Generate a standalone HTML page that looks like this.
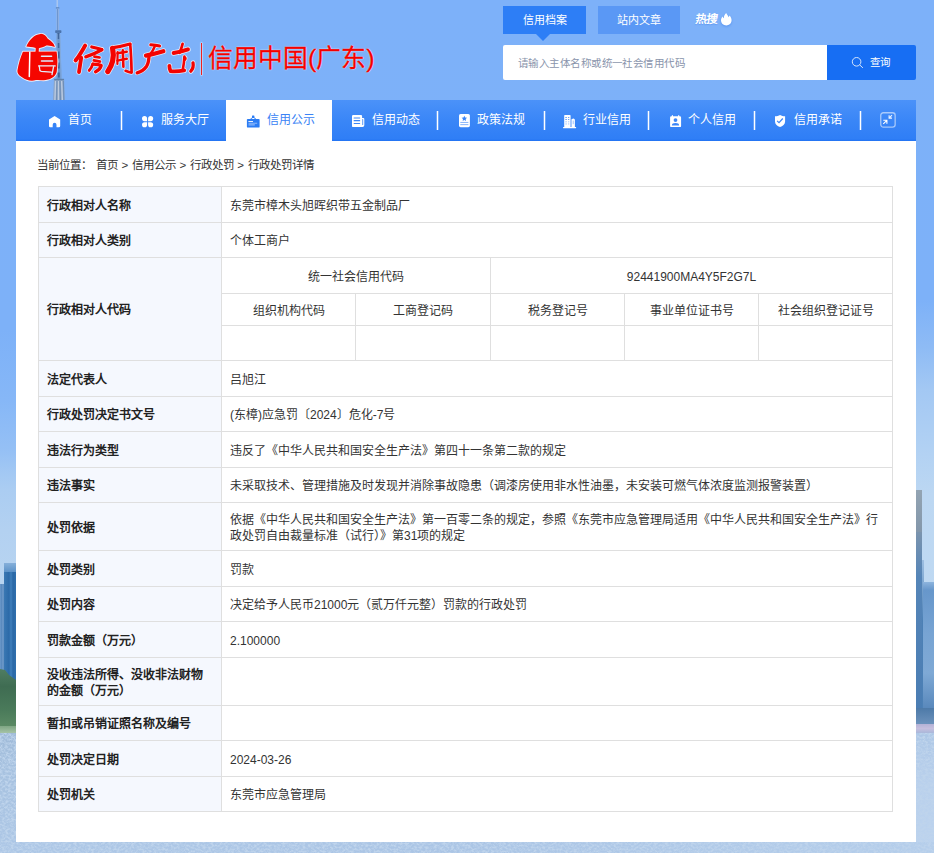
<!DOCTYPE html>
<html lang="zh-CN">
<head>
<meta charset="utf-8">
<title>行政处罚详情 - 信用中国(广东)</title>
<style>
*{box-sizing:border-box;margin:0;padding:0}
html,body{width:934px;height:853px;overflow:hidden}
body{position:relative;font-family:"Liberation Sans", sans-serif;color:#333;background:#7db1f9;font-size:12px}
.abs{position:absolute}
/* ---------- photographic background approximation ---------- */
#sky{position:absolute;left:0;top:0;width:934px;height:853px;
 background:linear-gradient(180deg,#7db1f9 0px,#7db1f8 330px,#86b7f7 400px,#95c0f5 450px,#a4c9f3 475px,#abcdf2 490px,#b3d1f1 530px,#b9d5f0 600px,#aac5e5 853px)}
#skyr{position:absolute;left:916px;top:0;width:18px;height:740px;
 background:linear-gradient(180deg,#7db1f9 0px,#7db1f8 300px,#8ebbf5 347px,#a3c8f3 390px,#b3d2f3 455px,#bcd7f2 495px,#bfd9f2 600px)}
/* ---------- header ---------- */
#logo-sep{position:absolute;left:201px;top:43px;width:1.3px;height:32px;background:#f02020;box-shadow:0 0 1px 0.5px rgba(255,255,255,.75)}
#title{position:absolute;left:208px;top:43px;height:32px;line-height:32px;font-size:24.75px;color:#f40000;white-space:nowrap;-webkit-text-stroke:0.35px #f40000;text-shadow:0 0 1.5px rgba(255,255,255,.9),0 0 1px rgba(255,255,255,.9)}
.tab{position:absolute;top:6px;height:28px;line-height:28px;text-align:center;color:#fff;font-size:11px;white-space:nowrap}
#tab1{left:503px;width:83px;background:#2d7ef6}
#tab1:after{content:"";position:absolute;left:32.5px;top:27.7px;border:7.5px solid transparent;border-top:7.4px solid #2d7ef6;border-bottom:0}
#tab2{left:598px;width:82px;background:#5a98f5}
#hot{position:absolute;left:694px;top:5px;height:28px;line-height:28px;color:#fff;font-size:11.5px;font-weight:bold;white-space:nowrap;text-shadow:0 1px 1px rgba(40,110,230,.35);transform:skewX(-7deg);transform-origin:0 100%}
#search{position:absolute;left:503px;top:45px;width:325px;height:35px;background:#fff;border-radius:2px 0 0 2px;line-height:37px;padding-left:15px;font-size:10.5px;letter-spacing:.45px;color:#8994ab;white-space:nowrap}
#btn{position:absolute;left:827px;top:45px;width:89px;height:35px;background:#176ef3;border-radius:0 2px 2px 0;color:#fff;font-size:10.5px;line-height:35px;white-space:nowrap}
#btn span{position:absolute;left:43px;top:0}
/* ---------- nav ---------- */
#navbg{position:absolute;left:16px;top:100px;width:900px;height:41px;background:linear-gradient(180deg,#4b92f9 0,#3a86f7 50%,#2f7ef6 39px,#2173f3 41px)}
#navon{position:absolute;left:226px;top:100px;width:106px;height:41px;background:#fff}
.nt{position:absolute;top:100px;height:41px;line-height:41px;font-size:12px;color:#fff;white-space:nowrap}
.nt.b{color:#3a83f5}
.ns{position:absolute;top:111px;width:1px;height:19px;background:#fff;box-shadow:1px 0 0 rgba(255,255,255,.25),-1px 0 0 rgba(255,255,255,.25)}
.ic{position:absolute;overflow:visible}
/* ---------- panel ---------- */
#panel{position:absolute;left:16px;top:141px;width:900px;height:701px;background:#fff}
#crumb{position:absolute;left:37px;top:157px;height:17px;line-height:17px;font-size:11.5px;letter-spacing:.12px;color:#333;white-space:nowrap}
.th{position:absolute;left:39px;width:182px;background:#f5f8fe;display:flex;align-items:center;padding-left:8px;padding-top:2px;font-weight:bold;font-size:12px;line-height:16px;color:#222;white-space:nowrap}
.td{position:absolute;left:222px;width:670px;display:flex;align-items:center;padding-left:8px;padding-top:2px;font-size:12px;line-height:16px;color:#333;white-space:nowrap}
.tc{position:absolute;display:flex;align-items:center;justify-content:center;padding-top:2px;font-size:12px;line-height:16px;color:#333;white-space:nowrap}
.hl{position:absolute;height:1px;background:#dfdfdf}
.vl{position:absolute;width:1px;background:#dfdfdf}
</style>
</head>
<body>
<div id="sky"></div><div id="skyr"></div>
<!-- left strip of the skyline photo -->
<div class="abs" style="left:0;top:584px;width:4px;height:92px;background:linear-gradient(90deg,#6c9acb 0,#5585ba 2px,#7aa5d2 3px,#4f80b6 4px)"></div>
<div class="abs" style="left:4px;top:563px;width:12px;height:120px;background:linear-gradient(90deg,#3a78b3 0,#2c6aa8 5px,#3f7fbb 7px,#2a68a6 9px,#2f6fad 12px)"></div>
<div class="abs" style="left:4px;top:563px;width:12px;height:9px;background:linear-gradient(180deg,#86b0da,#5c92c8)"></div>
<div class="abs" style="left:0;top:669px;width:16px;height:58px;background:linear-gradient(180deg,#4f7d62 0,#3f6c52 30%,#4a7a5a 70%,#5b8a64 100%);clip-path:polygon(0 0,5px 1px,9px 6px,16px 11px,16px 100%,0 100%)"></div>
<div class="abs" style="left:0;top:726px;width:16px;height:7px;background:linear-gradient(180deg,#7fa684,#a5c3a6)"></div>
<div class="abs" style="left:0;top:733px;width:16px;height:120px;background:linear-gradient(180deg,#9fbad8 0,#a6c1df 25%,#adc7e6 100%)"></div>
<!-- right strip -->
<div class="abs" style="left:916px;top:490px;width:5.5px;height:44px;background:linear-gradient(180deg,#93a4b3,#8296aa)"></div>
<div class="abs" style="left:916px;top:532px;width:5.5px;height:180px;background:linear-gradient(180deg,#7b94ae 0,#5585b8 25%,#4a7db3 100%)"></div>
<div class="abs" style="left:921.5px;top:560px;width:2px;height:152px;background:linear-gradient(180deg,#9dbfe2,#4c80b5 40%)"></div>
<div class="abs" style="left:923px;top:582px;width:11px;height:130px;background:linear-gradient(180deg,#8db4dd 0,#6797cb 8px,#78a4d3 40%,#7fa9d5 70%,#5585b9 100%)"></div>
<div class="abs" style="left:916px;top:708px;width:18px;height:17px;background:linear-gradient(180deg,#4d7aa8,#6e93bd)"></div>
<div class="abs" style="left:916px;top:724px;width:18px;height:9px;background:linear-gradient(180deg,#b4b2d6,#c6bfde 50%,#aab8da)"></div>
<div class="abs" style="left:916px;top:733px;width:18px;height:120px;background:linear-gradient(180deg,#adc7e6,#b9d0ec 40%,#bcd3ee)"></div>
<!-- bottom water -->
<div class="abs" style="left:0;top:842px;width:934px;height:11px;background:linear-gradient(90deg,#adc7e6,#abc5e5 50%,#b5ceeb)"></div>
<!-- subtle water texture -->
<svg class="abs" style="left:0;top:733px" width="934" height="120" viewBox="0 0 934 120"><filter id="wn" x="0" y="0" width="100%" height="100%"><feTurbulence type="fractalNoise" baseFrequency="0.35 0.5" numOctaves="3" seed="7"/><feColorMatrix type="matrix" values="0 0 0 0 0.52  0 0 0 0 0.66  0 0 0 0 0.84  3 0 0 0 -1.15"/></filter><rect width="934" height="120" filter="url(#wn)"/></svg>


<!-- header -->
<!-- Canton tower silhouette (part of background photo) -->
<svg class="ic" style="left:48px;top:0" width="22" height="100" viewBox="0 0 22 100">
<rect x="8.5" y="0" width="1.5" height="8" fill="#a9c6ef"/>
<rect x="7.9" y="7.2" width="3.4" height="1.5" fill="#5f88c0"/>
<rect x="8.4" y="8.6" width="2.6" height="22" fill="#94b5e6"/>
<rect x="9.3" y="9" width="0.8" height="21" fill="#5f89c4"/>
<rect x="7.2" y="30.2" width="6.2" height="2.7" rx="0.6" fill="#4b74ad"/>
<path d="M8.6 32.8 H12 L13.6 79 H8 Z" fill="#6a94cb"/>
<path d="M10.4 33 L10.9 79" stroke="#3f659c" stroke-width="1.8" stroke-dasharray="6 4 5 3.5 7 4"/>
<path d="M9 34 L8.6 79 M12 34 L13.1 79" stroke="#88aede" stroke-width="0.8"/>
<path d="M6 79 H16.1 L16.6 100 H5 Z" fill="#8ba4c6"/>
<path d="M6.2 79.5 H16" stroke="#5f80aa" stroke-width="1.4"/>
<path d="M7.6 81 L6.9 100 M10.4 81 L10.4 100 M13.6 81 L14.4 100" stroke="#bccbe0" stroke-width="1.3"/>
<path d="M9 81 L8.6 100 M12 81 L12.5 100 M15.4 81 L15.9 100" stroke="#6c8bb3" stroke-width="0.9"/>
</svg>
<!-- seal emblem -->
<svg class="ic" style="left:14px;top:30px" width="48" height="54" viewBox="14 30 48 54">
<g fill="#fff" stroke="#fff" stroke-width="1.9" stroke-opacity=".8" fill-opacity=".8" stroke-linejoin="round"><path d="M26.3 46.6 C29 40 34 34.6 40.4 33.9 C44 33.6 46.2 36 47.6 38.6 C50 40.6 53.6 42.2 54.9 46.9 C52 46.6 49 45 46.4 45.6 C44 47.5 41 47.6 38.9 48.2 L38.7 51.9 L35.5 51.9 L35.7 48.1 C32 47 29 47.1 26.3 46.6 Z"/><path d="M22.9 51.8 L56.6 51.6 C57.7 58 57.7 66 56.7 72 C55.6 76 52 78.6 48 79.6 C44 81 40 79.6 36 80.1 C31 81.5 26 80.2 22 77.2 C18.6 75.2 17 73 17.4 70.5 C18.5 64 20.6 57 22.9 51.8 Z"/></g>
<g fill="#f50600"><path d="M26.3 46.6 C29 40 34 34.6 40.4 33.9 C44 33.6 46.2 36 47.6 38.6 C50 40.6 53.6 42.2 54.9 46.9 C52 46.6 49 45 46.4 45.6 C44 47.5 41 47.6 38.9 48.2 L38.7 51.9 L35.5 51.9 L35.7 48.1 C32 47 29 47.1 26.3 46.6 Z"/><path d="M22.9 51.8 L56.6 51.6 C57.7 58 57.7 66 56.7 72 C55.6 76 52 78.6 48 79.6 C44 81 40 79.6 36 80.1 C31 81.5 26 80.2 22 77.2 C18.6 75.2 17 73 17.4 70.5 C18.5 64 20.6 57 22.9 51.8 Z"/></g>
<g stroke-linecap="round" fill="none">
<path d="M29.8 52.2 L29.3 76.6" stroke="#fff" stroke-width="1.5"/>
<path d="M41.5 56.3 H51.6 M41.5 60.9 H52.6" stroke="#dde9fb" stroke-width="1.5"/>
<path d="M38.6 65.9 H55.2" stroke="#e9f1fd" stroke-width="1.3"/>
<path d="M39.3 66.5 L39.9 70.6 L41.2 71.3 L51.2 72.1 M53.6 66.6 L52 74.5" stroke="#e3edfc" stroke-width="1.3"/>
</g>
</svg>
<!-- brush lettering -->
<svg id="logo-txt" class="ic" style="left:70px;top:38px" width="132" height="44" viewBox="70 38 132 44">
<g fill="none" stroke-linecap="round" stroke-linejoin="round" stroke="#fff" stroke-opacity=".75"><path d="M85.2 45.6 C82 51 79 56.5 75.6 60.4" stroke-width="5.4"/><path d="M81.2 57.6 L79 72" stroke-width="5.3"/><path d="M91.8 47 C95 47.6 99 48.6 101.8 49.6" stroke-width="4.8"/><path d="M101.8 49.8 C97 52.6 91 55.2 85.8 56.8" stroke-width="4.8"/><path d="M94.4 56.6 L99.6 57.5 M93.8 60.4 L100 61.6" stroke-width="4.1"/><path d="M92.8 64 C92 67 90.4 69 89.2 70.4" stroke-width="4.4"/><path d="M93 64.2 C96 64.4 99.6 64.8 101.2 65.6 C100.6 68 98.4 70.4 95.6 71.8" stroke-width="4.8"/><path d="M112.6 48.4 C113.6 53 113.4 58 112.6 61.2 C111.6 65.4 109.6 69 107.8 71.6" stroke-width="6.7"/><path d="M113.2 47.6 C119 46.8 125 45.4 130 44" stroke-width="4.6"/><path d="M130.2 44.2 C131 53 131.4 63 131.6 72.6 C129.6 72.4 127.4 71.6 125.6 70.8" stroke-width="4.2"/><path d="M122.8 50.4 L123.4 66.8" stroke-width="4.1"/><path d="M117.4 53.2 L126.8 51.8 M117.4 60.6 L126.8 58.8" stroke-width="3.9"/><path d="M117.6 52 L117.4 64" stroke-width="3.7"/><path d="M150.8 44.8 C153.6 45 157 45.4 159.6 46" stroke-width="4.6"/><path d="M154.6 46.6 C153.6 49.4 152 52 150.4 54" stroke-width="4.1"/><path d="M146 55.6 C152 54.4 158.4 52.6 163.4 51.2" stroke-width="5.7"/><path d="M149 56.4 C148.8 60 148.2 63.6 146.6 66.2 C144.4 69.4 140.6 71.8 137.2 72.8" stroke-width="4.8"/><path d="M182.6 43.8 C181.8 47 180.8 50.2 179.6 52.8" stroke-width="4.2"/><path d="M173.6 53 C178.6 52.2 184 50.8 188 49.4" stroke-width="5.4"/><path d="M184.4 56.6 C184.2 61 183.6 65.6 182.8 69.6" stroke-width="4.1"/><path d="M184.8 57 C186.4 57.4 186.2 59.6 184.4 60.4" stroke-width="3.3"/><path d="M169.4 65.8 C169.4 68 169.8 70 170.6 71.2 C175 71.6 180 71.2 184.2 70.4" stroke-width="5.3"/><path d="M193 62.8 C193.6 66 192.6 69.4 190.8 71.2" stroke-width="4.8"/></g>
<g fill="none" stroke-linecap="round" stroke-linejoin="round" stroke="#f40300"><path d="M85.2 45.6 C82 51 79 56.5 75.6 60.4" stroke-width="3.9"/><path d="M81.2 57.6 L79 72" stroke-width="3.8"/><path d="M91.8 47 C95 47.6 99 48.6 101.8 49.6" stroke-width="3.3"/><path d="M101.8 49.8 C97 52.6 91 55.2 85.8 56.8" stroke-width="3.3"/><path d="M94.4 56.6 L99.6 57.5 M93.8 60.4 L100 61.6" stroke-width="2.6"/><path d="M92.8 64 C92 67 90.4 69 89.2 70.4" stroke-width="2.9"/><path d="M93 64.2 C96 64.4 99.6 64.8 101.2 65.6 C100.6 68 98.4 70.4 95.6 71.8" stroke-width="3.3"/><path d="M112.6 48.4 C113.6 53 113.4 58 112.6 61.2 C111.6 65.4 109.6 69 107.8 71.6" stroke-width="5.2"/><path d="M113.2 47.6 C119 46.8 125 45.4 130 44" stroke-width="3.1"/><path d="M130.2 44.2 C131 53 131.4 63 131.6 72.6 C129.6 72.4 127.4 71.6 125.6 70.8" stroke-width="2.7"/><path d="M122.8 50.4 L123.4 66.8" stroke-width="2.6"/><path d="M117.4 53.2 L126.8 51.8 M117.4 60.6 L126.8 58.8" stroke-width="2.4"/><path d="M117.6 52 L117.4 64" stroke-width="2.2"/><path d="M150.8 44.8 C153.6 45 157 45.4 159.6 46" stroke-width="3.1"/><path d="M154.6 46.6 C153.6 49.4 152 52 150.4 54" stroke-width="2.6"/><path d="M146 55.6 C152 54.4 158.4 52.6 163.4 51.2" stroke-width="4.2"/><path d="M149 56.4 C148.8 60 148.2 63.6 146.6 66.2 C144.4 69.4 140.6 71.8 137.2 72.8" stroke-width="3.3"/><path d="M182.6 43.8 C181.8 47 180.8 50.2 179.6 52.8" stroke-width="2.7"/><path d="M173.6 53 C178.6 52.2 184 50.8 188 49.4" stroke-width="3.9"/><path d="M184.4 56.6 C184.2 61 183.6 65.6 182.8 69.6" stroke-width="2.6"/><path d="M184.8 57 C186.4 57.4 186.2 59.6 184.4 60.4" stroke-width="1.8"/><path d="M169.4 65.8 C169.4 68 169.8 70 170.6 71.2 C175 71.6 180 71.2 184.2 70.4" stroke-width="3.8"/><path d="M193 62.8 C193.6 66 192.6 69.4 190.8 71.2" stroke-width="3.3"/></g>
</svg>

<div id="logo-sep"></div>
<div id="title">信用中国(广东)</div>

<div class="tab" id="tab1">信用档案</div>
<div class="tab" id="tab2">站内文章</div>
<div id="hot">热搜</div>
<div id="search">请输入主体名称或统一社会信用代码</div>
<div id="btn"><span>查询</span></div>

<!-- nav -->
<div id="navbg"></div>
<div id="navon"></div>
<div class="nt" style="left:68px">首页</div>
<div class="nt" style="left:161px">服务大厅</div>
<div class="nt b" style="left:266.5px">信用公示</div>
<div class="nt" style="left:371.5px">信用动态</div>
<div class="nt" style="left:477px">政策法规</div>
<div class="nt" style="left:582.5px">行业信用</div>
<div class="nt" style="left:688px">个人信用</div>
<div class="nt" style="left:794px">信用承诺</div>
<i class="ns" style="left:121px"></i>
<i class="ns" style="left:437px"></i>
<i class="ns" style="left:544px"></i>
<i class="ns" style="left:648px"></i>
<i class="ns" style="left:754px"></i>
<i class="ns" style="left:860px"></i>
<!-- home -->
<svg class="ic" style="left:48.8px;top:115.7px" width="11.2" height="11.3" viewBox="0 0 11.2 11.3"><path fill="#fff" d="M5.6 0 L11.2 3.5 V10.1 Q11.2 11.3 10 11.3 H7.5 V8.7 A1.9 1.9 0 0 0 3.7 8.7 V11.3 H1.2 Q0 11.3 0 10.1 V3.5 Z"/></svg>
<!-- clover -->
<svg class="ic" style="left:141.8px;top:115.7px" width="11.2" height="11.3" viewBox="0 0 11.2 11.3"><g fill="#fff"><path d="M5.1 5.15 H2.55 A2.55 2.55 0 1 1 5.1 2.6 Z"/><path d="M6.1 5.15 V2.6 A2.55 2.55 0 1 1 8.65 5.15 Z"/><path d="M5.1 6.15 V8.7 A2.55 2.55 0 1 1 2.55 6.15 Z"/><path d="M6.1 6.15 H8.65 A2.55 2.55 0 1 1 6.1 8.7 Z"/></g></svg>
<!-- hanging sign (active, blue) -->
<svg class="ic" style="left:246px;top:114px" width="15" height="15" viewBox="0 0 15 15"><g fill="#2b7cf4"><rect x="0.9" y="4.9" width="12.7" height="8.7" rx="0.9"/><rect x="6" y="1.6" width="2.4" height="2.3" rx="0.5"/></g><path d="M7.2 3.2 L4.3 5.2 M7.2 3.2 L10.1 5.2" stroke="#2b7cf4" stroke-width="0.9" fill="none"/><path d="M2.4 7.5 H7" stroke="#eaf2fe" stroke-width="1"/><path d="M2.5 9.3 H11.2 M2.5 10.9 H8.8" stroke="#8db8f9" stroke-width="1.1"/></svg>
<!-- newspaper -->
<svg class="ic" style="left:351.9px;top:114.9px" width="12.4" height="12.1" viewBox="0 0 12.4 12.1"><path fill="#fff" d="M1.2 0 H9 Q10.1 0 10.1 1.1 V3.1 H11.3 Q12.3 3.1 12.3 4.1 V10.3 Q12.3 12.1 10.5 12.1 H1.2 Q0 12.1 0 10.9 V1.2 Q0 0 1.2 0 Z"/><rect x="10.3" y="3.9" width="0.9" height="6.2" rx="0.4" fill="#4a8ff7"/><rect x="1.6" y="2.3" width="6.6" height="1.4" rx="0.5" fill="#7fb0fa"/><rect x="1.6" y="5.1" width="6.6" height="1.1" rx="0.5" fill="#3c86f7"/><rect x="1.6" y="8" width="6.6" height="1.1" rx="0.5" fill="#3c86f7"/></svg>
<!-- doc with star -->
<svg class="ic" style="left:458.9px;top:113.9px" width="11" height="13.2" viewBox="0 0 11 13.2"><rect x="0" y="0" width="10.9" height="13.2" rx="1.6" fill="#fff"/><path fill="#3c86f7" d="M5.35 1.7 L6.2 3.5 L8.1 3.75 L6.7 5.1 L7.05 7 L5.35 6.1 L3.65 7 L4 5.1 L2.6 3.75 L4.5 3.5 Z"/><path d="M1.7 8.45 H9 M1.7 10.65 H9" stroke="#78abf9" stroke-width="0.9" stroke-linecap="round"/></svg>
<!-- buildings -->
<svg class="ic" style="left:562.9px;top:114.9px" width="13.2" height="13.3" viewBox="0 0 13.2 13.3"><rect x="1.2" y="0" width="6.4" height="12.2" rx="0.7" fill="#fff"/><rect x="7.6" y="4" width="1.1" height="8.2" fill="#a9c9fc"/><path fill="#fff" d="M8.7 12.2 V5 A1.6 1.6 0 0 1 11.9 5 V12.2 Z"/><rect x="0" y="12" width="13.2" height="1.25" rx="0.4" fill="#fff"/><g fill="#4a8ff7"><rect x="2.3" y="2.1" width="1.6" height="0.8"/><rect x="5" y="2.1" width="1.3" height="0.8"/><rect x="2.3" y="4.1" width="1.6" height="0.8"/><rect x="5" y="4.1" width="1.3" height="0.8"/></g><g fill="#bcd5fc"><rect x="2.3" y="6.1" width="1.6" height="1.3"/><rect x="5" y="6.1" width="1.3" height="1.3"/><rect x="2.3" y="8.3" width="1.6" height="1.3"/><rect x="5" y="8.3" width="1.3" height="1.3"/><rect x="9.6" y="5.6" width="1.4" height="3.6"/></g></svg>
<!-- person badge -->
<svg class="ic" style="left:669.9px;top:114.9px" width="11.2" height="12.1" viewBox="0 0 11.2 12.1"><path fill="#fff" d="M1.3 1.2 H1.8 V0.5 Q2.4 -0.3 3 0.5 V1.2 H8.1 V0.5 Q8.7 -0.3 9.3 0.5 V1.2 H9.9 Q11.1 1.2 11.1 2.4 V10.9 Q11.1 12.1 9.9 12.1 H1.3 Q0.1 12.1 0.1 10.9 V2.4 Q0.1 1.2 1.3 1.2 Z"/><circle cx="5.5" cy="5.1" r="1.9" fill="#3c86f7"/><path fill="#3c86f7" d="M1.9 10.4 Q1.9 8 5.5 8 Q9.1 8 9.1 10.4 Z"/></svg>
<!-- shield -->
<svg class="ic" style="left:774.9px;top:115.1px" width="10.1" height="12" viewBox="0 0 10.1 12"><path fill="#fff" d="M5.05 0 C6.4 0.9 8.3 1.3 10.1 1.3 V6.4 C10.1 9.2 7.7 11 5.05 12 C2.4 11 0 9.2 0 6.4 V1.3 C1.8 1.3 3.7 0.9 5.05 0 Z"/><path d="M2.1 5.9 L4 7.7 L7.8 3.5" stroke="#3c86f7" stroke-width="1.25" fill="none"/></svg>
<!-- collapse -->
<svg class="ic" style="left:880px;top:112px" width="16" height="16" viewBox="0 0 16 16"><rect x="0.75" y="0.75" width="14.4" height="14.4" rx="2.6" fill="none" stroke="#fff" stroke-opacity=".55" stroke-width="1.3"/><g stroke="#fff" stroke-width="1.1" fill="none"><path d="M3.3 8.3 H6.9 V11.8 M6.9 8.3 L3.3 11.9"/><path d="M9.1 3.2 V6.1 H12 M9.1 6.1 L12 3.2" stroke-opacity=".9"/></g></svg>
<!-- flame -->
<svg class="ic" style="left:720.5px;top:13px;filter:drop-shadow(0 1px 1px rgba(40,110,230,.45))" width="10.6" height="12.4" viewBox="0 0 10.6 12.4"><path fill="#fff" d="M5.2 0 C5.6 1.5 7.2 2.6 7.6 4.2 C8.1 3.8 8.4 3.2 8.5 2.6 C9.8 4 10.6 5.6 10.6 7.2 C10.6 10.2 8.2 12.4 5.3 12.4 C2.3 12.4 0 10.2 0 7.2 C0 5.6 0.7 4.3 1.6 3.4 C1.8 4.2 2.2 4.8 2.8 5.2 C2.8 3 3.8 1.2 5.2 0 Z"/></svg>
<!-- search -->
<svg class="ic" style="left:851px;top:56px" width="14" height="14" viewBox="0 0 14 14"><circle cx="5.6" cy="5.8" r="4.3" fill="none" stroke="#d6e6fd" stroke-width="1"/><path d="M8.8 9 L11.6 11.6" stroke="#d6e6fd" stroke-width="1" stroke-linecap="round"/></svg>


<!-- content panel -->
<div id="panel"></div>
<div id="crumb">当前位置： 首页 &gt; 信用公示 &gt; 行政处罚 &gt; 行政处罚详情</div>
<div class="th" style="top:187px;height:35px"><span>行政相对人名称</span></div>
<div class="td" style="top:187px;height:35px"><span>东莞市樟木头旭晖织带五金制品厂</span></div>
<div class="th" style="top:223px;height:34px"><span>行政相对人类别</span></div>
<div class="td" style="top:223px;height:34px"><span>个体工商户</span></div>
<div class="th" style="top:258px;height:102px"><span>行政相对人代码</span></div>
<div class="th" style="top:361px;height:35px"><span>法定代表人</span></div>
<div class="td" style="top:361px;height:35px"><span>吕旭江</span></div>
<div class="th" style="top:397px;height:34px"><span>行政处罚决定书文号</span></div>
<div class="td" style="top:397px;height:34px"><span>(东樟)应急罚〔2024〕危化-7号</span></div>
<div class="th" style="top:432px;height:35px"><span>违法行为类型</span></div>
<div class="td" style="top:432px;height:35px"><span>违反了《中华人民共和国安全生产法》第四十一条第二款的规定</span></div>
<div class="th" style="top:468px;height:34px"><span>违法事实</span></div>
<div class="td" style="top:468px;height:34px"><span>未采取技术、管理措施及时发现并消除事故隐患（调漆房使用非水性油墨，未安装可燃气体浓度监测报警装置）</span></div>
<div class="th" style="top:503px;height:47px"><span>处罚依据</span></div>
<div class="td" style="top:503px;height:47px"><span>依据《中华人民共和国安全生产法》第一百零二条的规定，参照《东莞市应急管理局适用《中华人民共和国安全生产法》行<br>政处罚自由裁量标准（试行）》第31项的规定</span></div>
<div class="th" style="top:551px;height:35px"><span>处罚类别</span></div>
<div class="td" style="top:551px;height:35px"><span>罚款</span></div>
<div class="th" style="top:587px;height:34px"><span>处罚内容</span></div>
<div class="td" style="top:587px;height:34px"><span>决定给予人民币21000元（贰万仟元整）罚款的行政处罚</span></div>
<div class="th" style="top:622px;height:35px"><span>罚款金额（万元）</span></div>
<div class="td" style="top:622px;height:35px"><span>2.100000</span></div>
<div class="th" style="top:658px;height:47px"><span>没收违法所得、没收非法财物<br>的金额（万元）</span></div>
<div class="th" style="top:706px;height:34px"><span>暂扣或吊销证照名称及编号</span></div>
<div class="th" style="top:741px;height:35px"><span>处罚决定日期</span></div>
<div class="td" style="top:741px;height:35px"><span>2024-03-26</span></div>
<div class="th" style="top:777px;height:34px"><span>处罚机关</span></div>
<div class="td" style="top:777px;height:34px"><span>东莞市应急管理局</span></div>
<div class="tc" style="left:222px;width:268px;top:258px;height:35px"><span>统一社会信用代码</span></div>
<div class="tc" style="left:491px;width:401px;top:258px;height:35px"><span>92441900MA4Y5F2G7L</span></div>
<div class="tc" style="left:222px;width:133px;top:294px;height:31px"><span>组织机构代码</span></div>
<div class="tc" style="left:356px;width:134px;top:294px;height:31px"><span>工商登记码</span></div>
<div class="tc" style="left:491px;width:133px;top:294px;height:31px"><span>税务登记号</span></div>
<div class="tc" style="left:625px;width:133px;top:294px;height:31px"><span>事业单位证书号</span></div>
<div class="tc" style="left:759px;width:133px;top:294px;height:31px"><span>社会组织登记证号</span></div>
<i class="hl" style="left:38px;top:186px;width:855px"></i>
<i class="hl" style="left:38px;top:222px;width:855px"></i>
<i class="hl" style="left:38px;top:257px;width:855px"></i>
<i class="hl" style="left:221px;top:293px;width:672px"></i>
<i class="hl" style="left:221px;top:325px;width:672px"></i>
<i class="hl" style="left:38px;top:360px;width:855px"></i>
<i class="hl" style="left:38px;top:396px;width:855px"></i>
<i class="hl" style="left:38px;top:431px;width:855px"></i>
<i class="hl" style="left:38px;top:467px;width:855px"></i>
<i class="hl" style="left:38px;top:502px;width:855px"></i>
<i class="hl" style="left:38px;top:550px;width:855px"></i>
<i class="hl" style="left:38px;top:586px;width:855px"></i>
<i class="hl" style="left:38px;top:621px;width:855px"></i>
<i class="hl" style="left:38px;top:657px;width:855px"></i>
<i class="hl" style="left:38px;top:705px;width:855px"></i>
<i class="hl" style="left:38px;top:740px;width:855px"></i>
<i class="hl" style="left:38px;top:776px;width:855px"></i>
<i class="hl" style="left:38px;top:811px;width:855px"></i>
<i class="vl" style="left:38px;top:186px;height:626px"></i>
<i class="vl" style="left:221px;top:186px;height:626px"></i>
<i class="vl" style="left:892px;top:186px;height:626px"></i>
<i class="vl" style="left:490px;top:257px;height:103px"></i>
<i class="vl" style="left:355px;top:293px;height:67px"></i>
<i class="vl" style="left:624px;top:293px;height:67px"></i>
<i class="vl" style="left:758px;top:293px;height:67px"></i>
</body>
</html>
